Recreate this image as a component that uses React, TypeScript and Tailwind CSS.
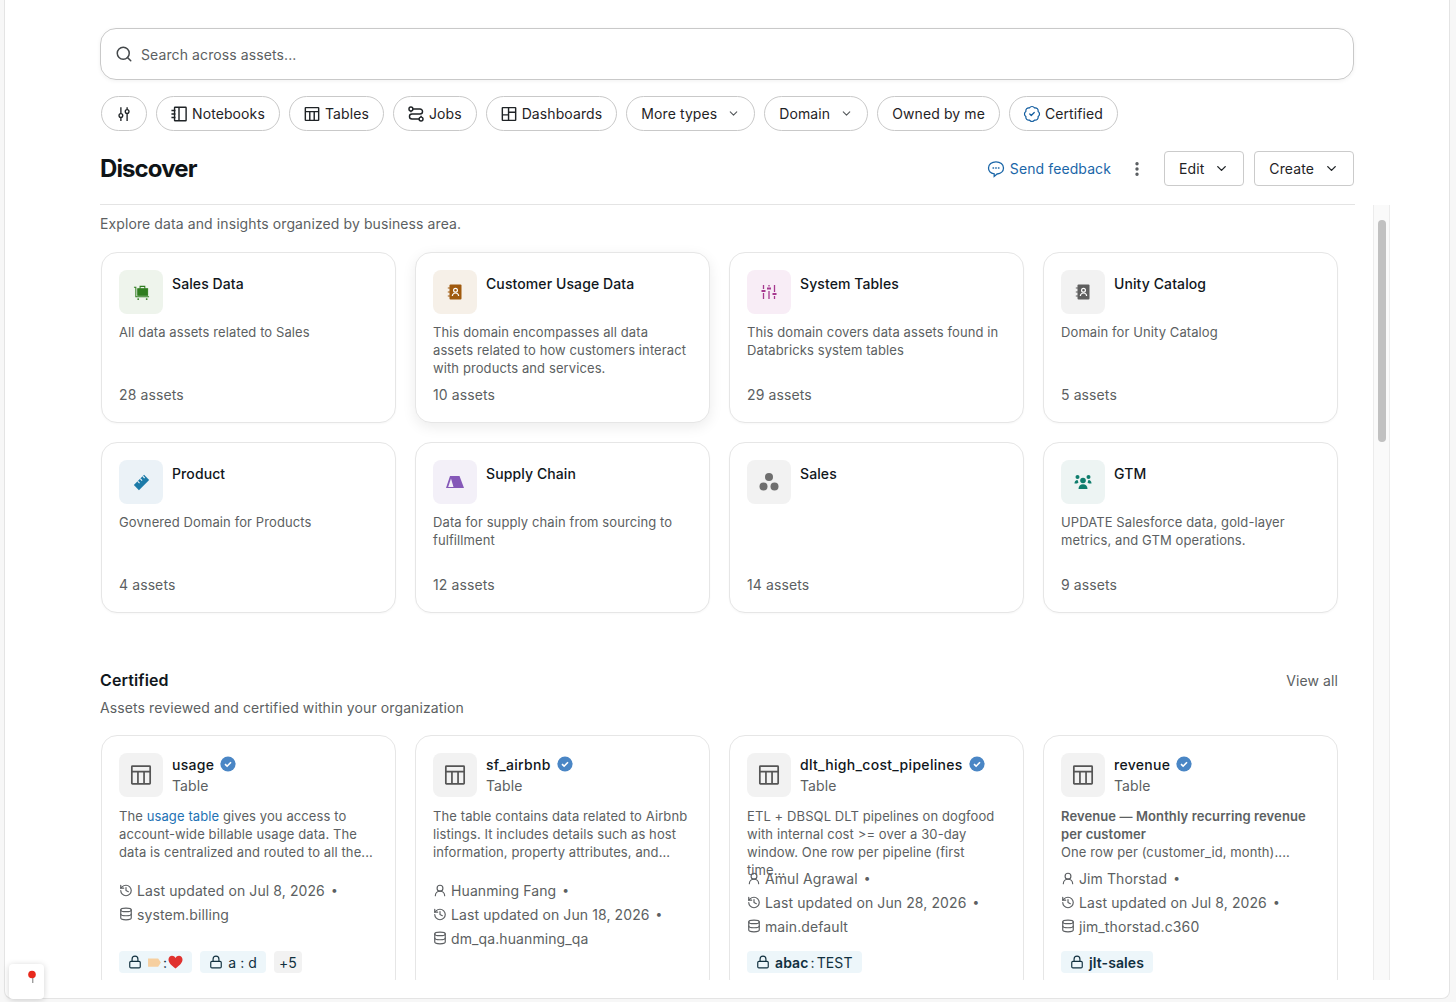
import type { ReactNode } from "react";
import { BadgeCheck, ChevronDown, Database, EllipsisVertical, History, Lock, Search, UserRound } from "lucide-react";

const FilterIcon = () => (
    <svg width="16" height="16" viewBox="0 0 18 18" fill="none" stroke="currentColor" strokeWidth="1.5">
        <path d="M5.5 1.500v7M5.500 13v4M12.500 1.500v2.500M12.500 8.500v8.500" />
        <circle cx="5.500" cy="10.700" r="2.100" />
        <circle cx="12.500" cy="6.200" r="2.100" />
    </svg>
);

const NotebookIcon = () => (
    <svg width="16" height="16" viewBox="0 0 18 18" fill="none" stroke="currentColor" strokeWidth="1.600">
        <rect x="4" y="1.500" width="13" height="15" rx="0.600" />
        <path d="M9 1.500v15M.5 5h4.500M.5 9h4.500M.5 13h4.500" />
    </svg>
);

const TableIcon = ({ size = 16, stroke = 1.600 }: { size?: number; stroke?: number }) => (
    <svg width={size} height={size} viewBox="0 0 18 18" fill="none" stroke="currentColor" strokeWidth={stroke}>
        <rect x="1.500" y="1.800" width="15" height="14.400" rx="0.500" />
        <path d="M1.500 6.300h15M6.500 6.300v9.900M11.500 6.300v9.900" />
    </svg>
);

const JobsIcon = () => (
    <svg width="16" height="16" viewBox="0 0 18 18" fill="none" stroke="currentColor" strokeWidth="1.600">
        <circle cx="3.300" cy="3.300" r="2.200" />
        <circle cx="14.700" cy="14.700" r="2.200" />
        <path d="M5.500 3.300h8a2.800 2.800 0 0 1 0 5.700H4.500a2.800 2.800 0 0 0 0 5.700h8" />
        <path d="M3.300 5.500v1.500M14.700 12.500v-1.500" />
    </svg>
);

const DashboardIcon = () => (
    <svg width="16" height="16" viewBox="0 0 18 18" fill="none" stroke="currentColor" strokeWidth="1.600">
        <rect x="1.500" y="1.800" width="15" height="14.400" rx="0.500" />
        <path d="M8.500 1.800v14.400M1.500 10h7M8.500 7h8" />
    </svg>
);

const FeedbackIcon = () => (
    <svg width="18" height="18" viewBox="0 0 18 18" fill="none" stroke="currentColor" strokeWidth="1.300">
        <path d="M9 1.800c4.300 0 7.500 2.700 7.500 6.200 0 3.300-2.700 5.700-6.400 6l-2.900 2.400v-2.600C3.800 13.300 1.500 11 1.500 8c0-3.500 3.200-6.200 7.500-6.200z" />
        <path d="M6 8h.6M8.700 8h.6M11.400 8h.6" strokeLinecap="round" />
    </svg>
);

const VerifiedIcon = () => (
    <svg width="16" height="16" viewBox="0 0 16 16">
        <circle cx="8" cy="8" r="7.600" fill="#4a86c5" />
        <path d="M5 8.200l2.100 2 3.900-4" fill="none" stroke="#fff" strokeWidth="1.600" />
    </svg>
);

const CartIcon = () => (
    <svg width="17" height="17" viewBox="0 0 18 18" fill="none" stroke="#2f7d1f">
        <path d="M1 3.500h2v10h14" strokeWidth="1.100" />
        <rect x="5" y="5" width="10.500" height="7" fill="#2f7d1f" />
        <path d="M7.500 5V2.500h5V5" strokeWidth="1.100" />
        <circle cx="5.500" cy="16" r="1" fill="#2f7d1f" stroke="none" />
        <circle cx="14.500" cy="16" r="1" fill="#2f7d1f" stroke="none" />
    </svg>
);

const ContactBookIcon = ({ color }: { color: string }) => (
    <svg width="18" height="18" viewBox="0 0 18 18">
        <rect x="3.500" y="1.500" width="12" height="15" rx="1" fill={color} />
        <path d="M1.800 5h3M1.800 9h3M1.800 13h3" stroke={color} strokeWidth="1.200" />
        <circle cx="9.500" cy="7.300" r="1.900" fill="none" stroke="#fff" strokeWidth="1.200" />
        <path d="M6.300 13c.3-2 1.500-3 3.200-3s2.900 1 3.200 3" fill="none" stroke="#fff" strokeWidth="1.200" />
    </svg>
);

const SlidersIcon = () => (
    <svg width="18" height="18" viewBox="0 0 18 18" fill="none" stroke="#a63a8f" strokeWidth="1.300">
        <path d="M3.500 2v4M3.500 10v6M9 2v1.500M9 8v8M14.500 2v7M14.500 13v3" />
        <path d="M1.500 8h4M7 5.500h4M12.500 11h4" strokeWidth="2" />
    </svg>
);

const RulerIcon = () => (
    <svg width="17" height="17" viewBox="0 0 20 20">
        <path d="M1 13L13 1L19 7L7 19z" fill="#1b7aa8" />
        <path d="M5.500 8.500l2.200 2.200M8.500 5.500l2.200 2.200M11.500 2.500l2.200 2.200" stroke="#ebf2f7" strokeWidth="1.300" />
    </svg>
);

const TentIcon = () => (
    <svg width="18" height="12" viewBox="0 0 18 12">
        <path d="M4 0h9.500L18 12H0z" fill="#8558b8" />
        <path d="M5 2.500L2.200 11h5.300z" fill="#f3f0f8" />
    </svg>
);

const DotsIcon = () => (
    <svg width="22" height="20" viewBox="0 0 22 20" fill="#6f6f6f">
        <circle cx="11" cy="5" r="4" />
        <circle cx="5.500" cy="14.500" r="4" />
        <circle cx="16.500" cy="14.500" r="4" />
    </svg>
);

const PeopleIcon = () => (
    <svg width="18" height="16" viewBox="0 0 18 16" fill="#0f7d6d">
        <circle cx="9" cy="6.500" r="2.800" />
        <path d="M4.500 15c0-3 1.800-4.700 4.500-4.700s4.500 1.700 4.500 4.700z" />
        <circle cx="3.500" cy="3" r="2" />
        <circle cx="14.500" cy="3" r="2" />
        <path d="M.5 9.500c0-2 1.200-3.500 3-3.500l1 2.500-1.500 1zM17.500 9.500c0-2-1.200-3.500-3-3.500l-1 2.500 1.500 1z" />
    </svg>
);

const TagEmoji = () => (
    <svg width="15" height="11" viewBox="0 0 16 12">
        <path d="M1 1.500h11l3 4.500-3 4.500H1z" fill="#f6cf9f" />
    </svg>
);

const HeartEmoji = () => (
    <svg width="15" height="14" viewBox="0 0 15 14">
        <path d="M7.500 13.500C3 10 .5 7.800.5 4.500.5 2.300 2.200.8 4 .8c1.500 0 2.700.8 3.500 2.100C8.300 1.600 9.500.8 11 .8c1.800 0 3.500 1.500 3.500 3.700 0 3.300-2.500 5.500-7 9z" fill="#e0322f" />
    </svg>
);

const Chip = ({ icon, label, caret }: { icon?: ReactNode; label?: string; caret?: boolean }) => (
    <button className="flex h-[35px] items-center gap-[5px] rounded-full border border-[#c9c9c9] bg-white px-[14px] text-[14px] text-[#1f2326]">
        {icon}
        {label}
        {caret && <ChevronDown size={13} className="ml-[5px] text-[#55595c]" />}
    </button>
);

const ActionButton = ({ label }: { label: string }) => (
    <button className="flex h-[35px] items-center rounded-[4px] border border-[#cbcbcb] bg-white px-[14px] text-[14px] text-[#1f2326]">
        {label}
        <ChevronDown size={15} className="ml-[10px]" strokeWidth={2.200} />
    </button>
);

const domains = [
    { title: "Sales Data", text: "All data assets related to Sales", count: "28 assets", bg: "bg-[#eef4ec]", icon: <CartIcon /> },
    { title: "Customer Usage Data", text: "This domain encompasses all data assets related to how customers interact with products and services.", count: "10 assets", bg: "bg-[#f6f0e8]", icon: <ContactBookIcon color="#a05a0e" />, raised: true },
    { title: "System Tables", text: "This domain covers data assets found in Databricks system tables", count: "29 assets", bg: "bg-[#f8edf6]", icon: <SlidersIcon /> },
    { title: "Unity Catalog", text: "Domain for Unity Catalog", count: "5 assets", bg: "bg-[#f2f2f2]", icon: <ContactBookIcon color="#5f5f5f" /> },
    { title: "Product", text: "Govnered Domain for Products", count: "4 assets", bg: "bg-[#ebf2f7]", icon: <RulerIcon /> },
    { title: "Supply Chain", text: "Data for supply chain from sourcing to fulfillment", count: "12 assets", bg: "bg-[#f3f0f8]", icon: <TentIcon /> },
    { title: "Sales", text: "", count: "14 assets", bg: "bg-[#f2f2f2]", icon: <DotsIcon /> },
    { title: "GTM", text: "UPDATE Salesforce data, gold-layer metrics, and GTM operations.", count: "9 assets", bg: "bg-[#edf4f3]", icon: <PeopleIcon /> },
];

const DomainCard = ({ item }: { item: (typeof domains)[number] }) => (
    <div className={`flex h-[171px] flex-col rounded-[16px] border border-[#e6e6e6] bg-white p-[17px] ${item.raised ? "shadow-[0_4px_14px_rgba(0,0,0,0.08)]" : "shadow-[0_1px_2px_rgba(0,0,0,0.03)]"}`}>
        <div className="flex">
            <div className={`flex size-[44px] shrink-0 items-center justify-center rounded-[8px] ${item.bg}`}>{item.icon}</div>
            <div className="ml-[9px] mt-[4px] text-[14px] leading-[20px] font-medium text-[#11171c]">{item.title}</div>
        </div>
        <p className="mt-[9px] text-[13px] leading-[18px] text-[#5c5f62]">{item.text}</p>
        <div className="mt-auto text-[14px] leading-[20px] text-[#5c5f62]">{item.count}</div>
    </div>
);

const MetaLine = ({ icon, text, dot }: { icon: ReactNode; text: string; dot?: boolean }) => (
    <div className="flex h-[24px] items-center text-[14px] text-[#5c5f62]">
        <span className="mr-[4px] flex w-[14px] justify-center">{icon}</span>
        {text}
        {dot && <span className="ml-[6px] text-[12px]">•</span>}
    </div>
);

const Tag = ({ children }: { children: ReactNode }) => (
    <span className="flex h-[22px] items-center gap-[5px] rounded-[4px] bg-[#edf6fa] px-[9px] text-[14px] text-[#11303f]">
        <Lock size={14} />
        {children}
    </span>
);

const CertifiedCard = ({ name, desc, owner, updated, location, tags, metaGap }: { name: string; desc: ReactNode; owner?: string; updated: string; location: string; tags?: ReactNode; metaGap: string }) => (
    <div className="h-[260px] rounded-[16px] border border-[#e6e6e6] bg-white p-[17px]">
        <div className="flex">
            <div className="flex size-[44px] shrink-0 items-center justify-center rounded-[8px] bg-[#f2f2f2] text-[#555]">
                <TableIcon size={22} stroke={1.400} />
            </div>
            <div className="ml-[9px]">
                <div className="flex h-[22px] items-center gap-[6px] text-[14px] font-medium tracking-[0.3px] text-[#11171c]">
                    {name}
                    <VerifiedIcon />
                </div>
                <div className="text-[14px] leading-[22px] text-[#5c5f62]">Table</div>
            </div>
        </div>
        <div className="mt-[10px] h-[54px] text-[13px] leading-[18px] text-[#5c5f62]">{desc}</div>
        <div className={metaGap}>
            {owner && <MetaLine icon={<UserRound size={15} />} text={owner} dot />}
            <MetaLine icon={<History size={15} />} text={updated} dot={true} />
            <MetaLine icon={<Database size={14} />} text={location} />
        </div>
        {tags}
    </div>
);

export default function App() {
    return (
        <div className="h-[1002px] w-[1456px] overflow-hidden bg-[#f7f7f7] tracking-[0.1px] [font-family:Inter,'Noto_Sans',sans-serif]">
            <div className="relative ml-[4px] h-[999px] w-[1446px] rounded-b-[8px] border-x border-b border-[#e4e4e4] bg-white pl-[95px]">
                {/* Search and filters */}
                <div className="w-[1255px] pt-[28px]">
                    <div className="flex h-[52px] w-[1254px] items-center rounded-[16px] border border-[#c9c9c9] px-[14px] shadow-[0_1px_4px_rgba(0,0,0,0.06)]">
                        <Search size={18} className="text-[#44484b]" />
                        <span className="ml-[8px] text-[14px] text-[#5c5f62]">Search across assets...</span>
                    </div>
                    <div className="mt-[16px] flex gap-[9px] pl-[1px]">
                        <Chip icon={<FilterIcon />} />
                        <Chip icon={<NotebookIcon />} label="Notebooks" />
                        <Chip icon={<TableIcon />} label="Tables" />
                        <Chip icon={<JobsIcon />} label="Jobs" />
                        <Chip icon={<DashboardIcon />} label="Dashboards" />
                        <Chip label="More types" caret />
                        <Chip label="Domain" caret />
                        <Chip label="Owned by me" />
                        <Chip icon={<BadgeCheck size={18} className="-mx-[1px] text-[#0e5a9e]" strokeWidth={1.600} />} label="Certified" />
                    </div>
                    <div className="mt-[20px] flex h-[35px] w-[1254px] items-center">
                        <h1 className="pt-[1px] text-[24px] font-bold tracking-[-0.9px] text-[#0f1417]">Discover</h1>
                        <div className="ml-auto flex items-center gap-[5px] text-[14px] text-[#1a66a8]">
                            <FeedbackIcon />
                            Send feedback
                        </div>
                        <EllipsisVertical size={18} className="ml-[17px] text-[#55595c]" strokeWidth={2.500} />
                        <div className="ml-[18px]">
                            <ActionButton label="Edit" />
                        </div>
                        <div className="ml-[10px]">
                            <ActionButton label="Create" />
                        </div>
                    </div>
                    <div className="mt-[18px] h-px bg-[#e4e4e4]" />
                </div>

                {/* Scroll area */}
                <div className="flex h-[775px] overflow-hidden">
                    <div className="w-[1238px] shrink-0">
                        <p className="mt-[9px] text-[14px] leading-[20px] text-[#5c5f62]">Explore data and insights organized by business area.</p>
                        <div className="ml-[1px] mt-[18px] grid grid-cols-4 gap-x-[19px] gap-y-[19px]">
                            {domains.map((item) => (
                                <DomainCard key={item.title} item={item} />
                            ))}
                        </div>
                        <div className="mt-[55px] flex h-[24px] items-center">
                            <h2 className="text-[16px] font-semibold text-[#11171c]">Certified</h2>
                            <span className="ml-auto text-[14px] text-[#5c5f62]">View all</span>
                        </div>
                        <p className="mt-[6px] text-[14px] leading-[20px] text-[#5c5f62]">Assets reviewed and certified within your organization</p>
                        <div className="ml-[1px] mt-[17px] grid grid-cols-4 gap-x-[19px]">
                            <CertifiedCard
                                name="usage"
                                desc={
                                    <>
                                        The <span className="text-[#2272b4]">usage table</span> gives you access to account-wide billable usage data. The data is centralized and routed to all the...
                                    </>
                                }
                                updated="Last updated on Jul 8, 2026"
                                location="system.billing"
                                metaGap="mt-[17px]"
                                tags={
                                    <div className="mt-[25px] flex items-center gap-[8px]">
                                        <Tag>
                                            <span className="flex items-center gap-[1px]">
                                                <TagEmoji />:<HeartEmoji />
                                            </span>
                                        </Tag>
                                        <Tag>a : d</Tag>
                                        <span className="flex h-[22px] items-center rounded-[4px] bg-[#f2f2f2] px-[5px] text-[14px] text-[#11303f]">+5</span>
                                    </div>
                                }
                            />
                            <CertifiedCard
                                name="sf_airbnb"
                                desc="The table contains data related to Airbnb listings. It includes details such as host information, property attributes, and..."
                                owner="Huanming Fang"
                                updated="Last updated on Jun 18, 2026"
                                location="dm_qa.huanming_qa"
                                metaGap="mt-[17px]"
                            />
                            <CertifiedCard
                                name="dlt_high_cost_pipelines"
                                desc="ETL + DBSQL DLT pipelines on dogfood with internal cost >= over a 30-day window. One row per pipeline (first time..."
                                owner="Amul Agrawal"
                                updated="Last updated on Jun 28, 2026"
                                location="main.default"
                                metaGap="mt-[5px]"
                                tags={
                                    <div className="mt-[13px] flex">
                                        <Tag>
                                            <span>
                                                <span className="font-semibold">abac</span>
                                                <span className="mx-[2px]">:</span>TEST
                                            </span>
                                        </Tag>
                                    </div>
                                }
                            />
                            <CertifiedCard
                                name="revenue"
                                desc={
                                    <>
                                        <span className="font-semibold">Revenue — Monthly recurring revenue per customer</span>
                                        <br />
                                        One row per (customer_id, month)....
                                    </>
                                }
                                owner="Jim Thorstad"
                                updated="Last updated on Jul 8, 2026"
                                location="jim_thorstad.c360"
                                metaGap="mt-[5px]"
                                tags={
                                    <div className="mt-[13px] flex">
                                        <Tag>
                                            <span className="font-semibold">jlt-sales</span>
                                        </Tag>
                                    </div>
                                }
                            />
                        </div>
                    </div>
                    <div className="ml-[35px] h-full w-[17px] shrink-0 border-x border-[#ececec] bg-[#fafafa] pt-[15px]">
                        <div className="mx-auto h-[222px] w-[8px] rounded-full bg-[#c1c1c1]" />
                    </div>
                </div>

                {/* Pinned widget */}
                <div className="absolute bottom-[-1px] left-[4px] flex size-[35px] items-start rounded-[4px] bg-white pl-[18px] pt-[6px] shadow-[0_1px_6px_rgba(0,0,0,0.18)]">
                    <svg width="10" height="14" viewBox="0 0 10 14">
                        <circle cx="5" cy="4.500" r="3.800" fill="#e8291c" />
                        <path d="M5.800 8v5" stroke="#777" strokeWidth="1" />
                    </svg>
                </div>
            </div>
        </div>
    );
}
